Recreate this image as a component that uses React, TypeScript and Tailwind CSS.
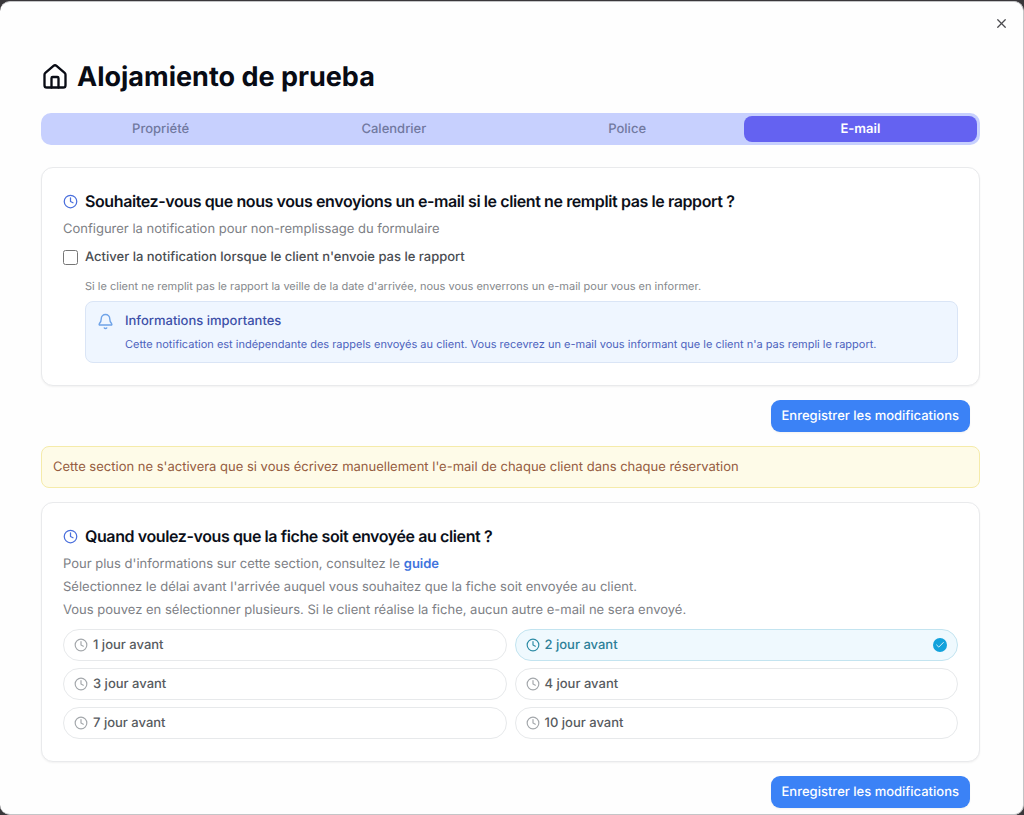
import { useState, type ReactNode } from 'react'
import { Bell, Check, Clock, House, X } from 'lucide-react'
import { clsx } from 'clsx'

const TABS = ['Propriété', 'Calendrier', 'Police', 'E-mail']
const DELAYS = [1, 2, 3, 4, 7, 10]

function Card({ title, children }: { title: string; children: ReactNode }) {
  return (
    <section className="rounded-xl border border-[#e9eaec] bg-white px-[21px] pt-[21px] pb-[22px] shadow-xs">
      <h2 className="flex items-center gap-[7px] text-base leading-6 font-semibold tracking-tight text-[#0b0f19]">
        <Clock className="size-[15px] shrink-0 text-[#4a6fdc]" />
        {title}
      </h2>
      {children}
    </section>
  )
}

function SaveButton() {
  return (
    <div className="flex justify-end pr-[10px]">
      <button
        type="button"
        className="h-8 rounded-[9px] bg-[#3b82f6] px-[11px] text-[13px] leading-5 font-medium text-white shadow-xs"
      >
        Enregistrer les modifications
      </button>
    </div>
  )
}

interface DelayOptionProps {
  days: number
  selected: boolean
  onToggle: () => void
}

function DelayOption({ days, selected, onToggle }: DelayOptionProps) {
  return (
    <button
      type="button"
      aria-pressed={selected}
      onClick={onToggle}
      className={clsx(
        'flex h-8 items-center gap-[5px] rounded-full border px-[10px] text-[13px] leading-5 font-medium',
        selected
          ? 'border-[#c3e4f0] bg-[#eff9fe] text-[#2c7f98]'
          : 'border-[#e7e9eb] bg-white text-[#575b60]',
      )}
    >
      <Clock className={clsx('size-[14px] shrink-0', selected ? 'text-[#2c8ba5]' : 'text-[#a3a7ab]')} />
      {days} jour avant
      {selected && (
        <span className="ml-auto flex size-[14px] items-center justify-center rounded-full bg-[#12a2dc] text-white">
          <Check className="size-[10px]" />
        </span>
      )}
    </button>
  )
}

export default function App() {
  const [activeTab, setActiveTab] = useState('E-mail')
  const [notify, setNotify] = useState(false)
  const [selected, setSelected] = useState<number[]>([2])

  const toggle = (days: number) =>
    setSelected((prev) => (prev.includes(days) ? prev.filter((d) => d !== days) : [...prev, days]))

  return (
    <div className="flex min-h-screen flex-col bg-[#39373a] pt-px font-['Inter','Liberation_Sans',sans-serif] [text-rendering:geometricPrecision] [&_button]:[text-rendering:inherit]">
      <main className="relative flex-1 rounded-[10px] border border-l-0 border-[#c4c5c7] bg-[#fefefe] pt-[57px] pr-[43px] pb-[5px] pl-[41px]">
        <button type="button" aria-label="Fermer" className="absolute top-[14px] right-[14px] text-[#4b4b4f]">
          <X className="size-[15px]" />
        </button>

        {/* Title */}
        <h1 className="flex items-center gap-2 text-[27px] leading-9 font-bold text-[#080b14]">
          <House className="size-7 shrink-0" />
          Alojamiento de prueba
        </h1>

        {/* Tabs */}
        <div role="tablist" className="mt-[18px] grid grid-cols-4 rounded-[10px] bg-[#c7d0fe] p-[3px]">
          {TABS.map((tab) => (
            <button
              key={tab}
              type="button"
              role="tab"
              aria-selected={tab === activeTab}
              onClick={() => setActiveTab(tab)}
              className={clsx(
                'h-[26px] rounded-lg text-[13px] leading-5',
                tab === activeTab ? 'bg-[#6462f1] font-semibold text-white' : 'font-medium text-[#7179a0]',
              )}
            >
              {tab}
            </button>
          ))}
        </div>

        <div className="mt-[22px] flex flex-col gap-[14px]">
          {/* Missing report notification */}
          <Card title="Souhaitez-vous que nous vous envoyions un e-mail si le client ne remplit pas le rapport ?">
            <p className="mt-[6px] text-[13px] leading-5 text-[#7d8085]">
              Configurer la notification pour non-remplissage du formulaire
            </p>
            <label className="mt-2 flex items-center gap-[7px] text-[13px] leading-5 font-medium text-[#4a4d52]">
              <input
                type="checkbox"
                checked={notify}
                onChange={(e) => setNotify(e.target.checked)}
                className="size-[15px] shrink-0"
              />
              Activer la notification lorsque le client n'envoie pas le rapport
            </label>
            <div className="mt-[10px] pl-[22px]">
              <p className="text-[11px] leading-[18px] text-[#85888c]">
                Si le client ne remplit pas le rapport la veille de la date d'arrivée, nous vous enverrons un e-mail
                pour vous en informer.
              </p>
              <div className="mt-[6px] flex gap-[11px] rounded-lg border border-[#dae5f6] bg-[#eff6ff] px-[11px] py-[9px]">
                <Bell className="mt-[2px] size-[17px] shrink-0 text-[#6fa3e8]" />
                <div>
                  <h3 className="text-[13px] leading-5 font-medium text-[#3d50a8]">Informations importantes</h3>
                  <p className="mt-1 text-[11px] leading-[18px] text-[#4c62bd]">
                    Cette notification est indépendante des rappels envoyés au client. Vous recevrez un e-mail vous
                    informant que le client n'a pas rempli le rapport.
                  </p>
                </div>
              </div>
            </div>
          </Card>

          <SaveButton />

          <p className="rounded-lg border border-[#f5ebaa] bg-[#fefbe8] px-[11px] py-[10px] text-[13px] leading-5 text-[#955c40]">
            Cette section ne s'activera que si vous écrivez manuellement l'e-mail de chaque client dans chaque
            réservation
          </p>

          {/* Sending delays */}
          <Card title="Quand voulez-vous que la fiche soit envoyée au client ?">
            <div className="mt-[6px] flex flex-col gap-[3px] text-[13px] leading-5 text-[#7d8085]">
              <p>
                Pour plus d'informations sur cette section, consultez le{' '}
                <a href="#guide" className="font-semibold text-[#3f74dd]">
                  guide
                </a>
              </p>
              <p>Sélectionnez le délai avant l'arrivée auquel vous souhaitez que la fiche soit envoyée au client.</p>
              <p>Vous pouvez en sélectionner plusieurs. Si le client réalise la fiche, aucun autre e-mail ne sera envoyé.</p>
            </div>
            <div className="mt-[9px] grid grid-cols-2 gap-x-2 gap-y-[7px]">
              {DELAYS.map((days) => (
                <DelayOption
                  key={days}
                  days={days}
                  selected={selected.includes(days)}
                  onToggle={() => toggle(days)}
                />
              ))}
            </div>
          </Card>

          <SaveButton />
        </div>
      </main>
    </div>
  )
}
